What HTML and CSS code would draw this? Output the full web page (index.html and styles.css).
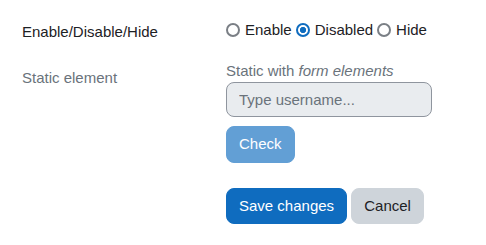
FILE: index.html
```html
<!DOCTYPE html>
<html lang="en">
<head>
    <meta charset="UTF-8">
    <title>Form elements</title>
    <link rel="stylesheet" href="styles.css">
</head>
<body>
    <form class="mform" onsubmit="return false">
        <div class="form-row">
            <div class="form-label">Enable/Disable/Hide</div>
            <div class="form-field radios">
                <label class="radio-option"><input type="radio" name="state" value="enable"> Enable</label>
                <label class="radio-option"><input type="radio" name="state" value="disabled" checked> Disabled</label>
                <label class="radio-option"><input type="radio" name="state" value="hide"> Hide</label>
            </div>
        </div>
        <div class="form-row">
            <div class="form-label muted">Static element</div>
            <div class="form-field">
                <div class="static-text">Static with <em>form elements</em></div>
                <input class="form-control" type="text" placeholder="Type username..." disabled>
                <button class="btn btn-primary check" type="button" disabled>Check</button>
            </div>
        </div>
        <div class="form-row">
            <div class="form-label"></div>
            <div class="form-field actions">
                <button class="btn btn-primary" type="submit">Save changes</button>
                <button class="btn btn-secondary" type="button">Cancel</button>
            </div>
        </div>
    </form>
</body>
</html>
```

FILE: styles.css
```css
html, body {
    margin: 0;
    background: #fff;
}

body {
    font-family: "Liberation Sans", Arial, sans-serif;
    font-size: 15px;
    line-height: 1.5;
    color: #1d2125;
}

.mform {
    padding: 14px 0 0 22px;
}

.form-row {
    display: grid;
    grid-template-columns: 204px 1fr;
    margin-bottom: 16px;
}

.form-label {
    padding-top: 7px;
}

.muted,
.static-text {
    color: #6a737b;
}

.radios {
    display: flex;
    align-items: center;
    padding-top: 2px;
}

.radio-option {
    display: inline-flex;
    align-items: center;
    margin-right: 4px;
}

/* hand-drawn radio, close to the Chrome one but with a heavier ring */
.radio-option input {
    appearance: none;
    box-sizing: border-box;
    width: 14px;
    height: 14px;
    margin: 0 5px 0 0;
    border: 2px solid #7a7f85;
    border-radius: 50%;
    background: #fff;
}

.radio-option input:checked {
    border-color: #0f6cbf;
    background: radial-gradient(circle, #0f6cbf 0 2.8px, #fff 3.4px);
}

.form-control {
    display: block;
    box-sizing: border-box;
    width: 206px;
    height: 35px;
    padding: 6px 12px;
    font: inherit;
    color: #1d2125;
    background: #e9ecef;
    border: 1px solid #8f959e;
    border-radius: 8px;
}

.form-control::placeholder {
    color: #6a737b;
    opacity: 1;
}

.btn {
    display: inline-block;
    padding: 6px 12px;
    font: inherit;
    line-height: 1.5;
    border: 1px solid transparent;
    border-radius: 8px;
    cursor: pointer;
}

.btn-primary {
    color: #fff;
    background: #0f6cbf;
    border-color: #0f6cbf;
}

.btn-primary:disabled {
    opacity: .65;
    cursor: default;
}

.btn-secondary {
    color: #1d2125;
    background: #ced4da;
    border-color: #ced4da;
}

.check {
    margin-top: 9px;
    margin-bottom: 9px;
}
```
